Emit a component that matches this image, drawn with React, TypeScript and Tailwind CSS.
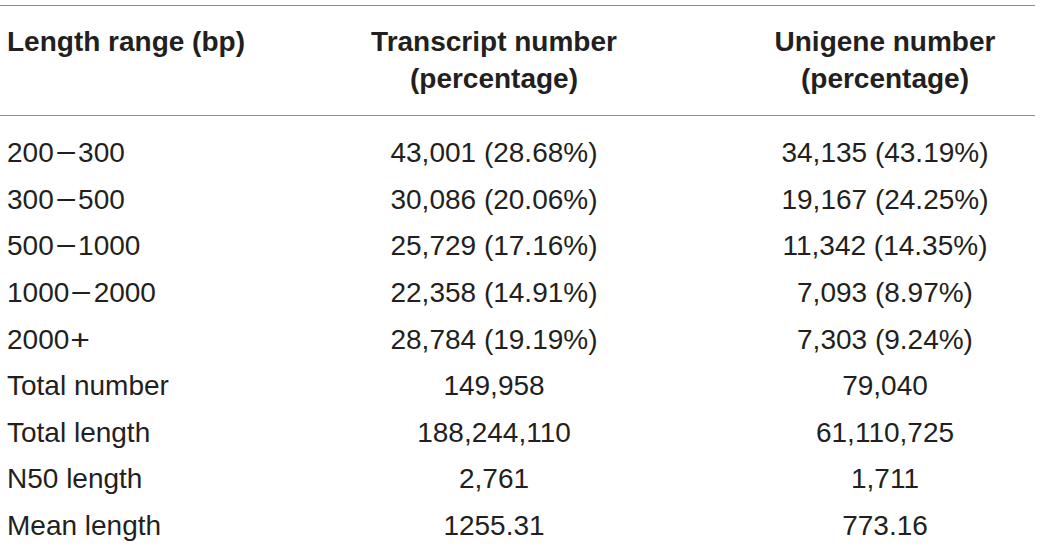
const rows: [string, string, string][] = [
  ["200\u2212300", "43,001 (28.68%)", "34,135 (43.19%)"],
  ["300\u2212500", "30,086 (20.06%)", "19,167 (24.25%)"],
  ["500\u22121000", "25,729 (17.16%)", "11,342 (14.35%)"],
  ["1000\u22122000", "22,358 (14.91%)", "7,093 (8.97%)"],
  ["2000+", "28,784 (19.19%)", "7,303 (9.24%)"],
  ["Total number", "149,958", "79,040"],
  ["Total length", "188,244,110", "61,110,725"],
  ["N50 length", "2,761", "1,711"],
  ["Mean length", "1255.31", "773.16"],
];

// ranges like 200−300 get a slightly wider dash / plus, like the print
const Label = ({ text }: { text: string }) => {
  if (text.includes("\u2212")) {
    const [a, b] = text.split("\u2212");
    return (
      <>
        {a}
        <span className="mx-[4px] inline-block scale-x-[1.3]">{"\u2212"}</span>
        {b}
      </>
    );
  }
  if (text.endsWith("+")) {
    return (
      <>
        {text.slice(0, -1)}
        <span className="ml-[3px] inline-block scale-x-[1.2]">+</span>
      </>
    );
  }
  return <>{text}</>;
};

export default function App() {
  return (
    <div className="w-[1040px] h-[551px] bg-white overflow-hidden pt-[5px] font-['Liberation_Sans',Arial,sans-serif] text-[#231f20]">
      <div className="w-[1035px] border-t border-[#8c8c8c]">
        <div className="grid grid-cols-[340px_308px_1fr] pt-[17px] pb-[18px] border-b border-[#8c8c8c] text-[28px] leading-[37px] font-bold">
          <div className="pl-[7px]">Length range (bp)</div>
          <div className="text-center">
            Transcript number
            <br />
            (percentage)
          </div>
          <div className="text-center pl-[87px]">
            Unigene number
            <br />
            (percentage)
          </div>
        </div>
        <div className="pt-[14px] text-[28px]">
          {rows.map((r) => (
            <div
              key={r[0]}
              className="grid grid-cols-[340px_308px_1fr] h-[46.6px] items-center"
            >
              <div className="pl-[7px]">
                <Label text={r[0]} />
              </div>
              <div className="text-center">{r[1]}</div>
              <div className="text-center pl-[87px]">{r[2]}</div>
            </div>
          ))}
        </div>
      </div>
    </div>
  );
}
